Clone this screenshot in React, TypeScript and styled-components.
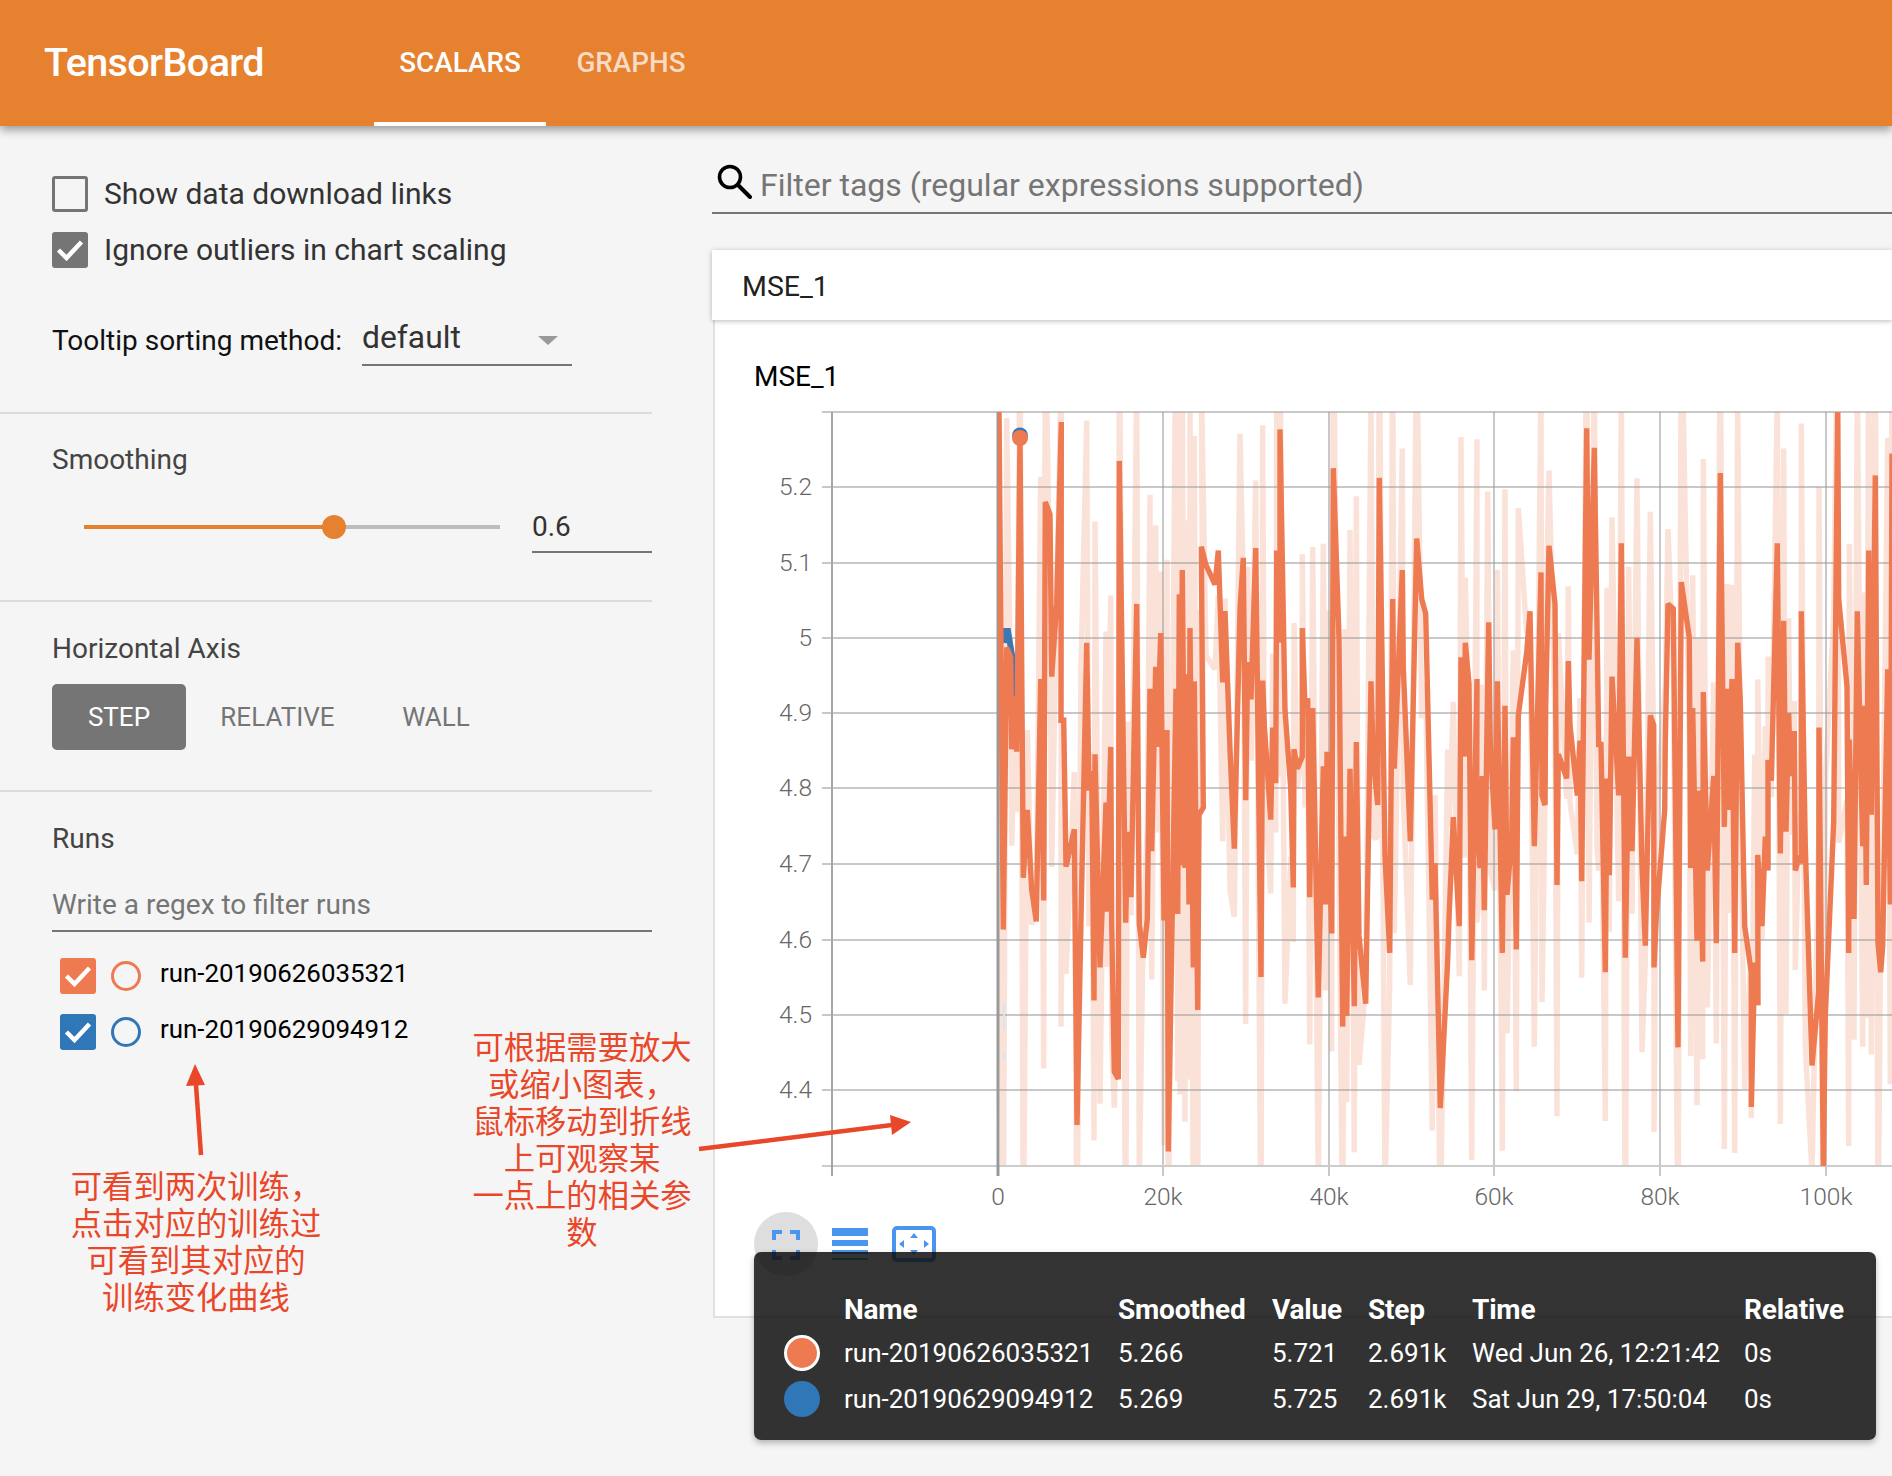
import React from "react";
import styled, { createGlobalStyle } from "styled-components";

const Global = createGlobalStyle`
  html, body { margin: 0; padding: 0; background: #f5f5f5; }
  body { width: 1892px; height: 1476px; overflow: hidden; font-family: Roboto, "Noto Sans CJK SC", sans-serif; }
`;

const Page = styled.div`
  position: relative;
  width: 1892px;
  height: 1476px;
  overflow: hidden;
  background: #f5f5f5;
`;

const Header = styled.header`
  position: relative;
  z-index: 2;
  display: flex;
  align-items: stretch;
  height: 126px;
  padding-left: 44px;
  box-sizing: border-box;
  background: #e6812f;
  box-shadow: 0 4px 9px rgba(0, 0, 0, 0.38);
`;

const Brand = styled.div`
  width: 330px;
  color: #fff;
  font-size: 39.5px;
  font-weight: 500;
  letter-spacing: -0.6px;
  line-height: 125px;
`;

const Tab = styled.div<{ $active?: boolean }>`
  width: ${(p) => (p.$active ? 172 : 170)}px;
  box-sizing: border-box;
  text-align: center;
  color: ${(p) => (p.$active ? "#fff" : "rgba(255,255,255,0.72)")};
  font-size: 27.8px;
  font-weight: 500;
  line-height: 125px;
  border-bottom: 4px solid ${(p) => (p.$active ? "#fff" : "transparent")};
`;

const Body = styled.div`
  display: grid;
  grid-template-columns: 652px 1fr;
  column-gap: 60px;
`;

const Sidebar = styled.aside`
  display: flex;
  flex-direction: column;
`;

const Section = styled.section<{ $height: number; $top: number }>`
  box-sizing: border-box;
  height: ${(p) => p.$height}px;
  padding: ${(p) => p.$top}px 0 0 52px;
  border-bottom: 2px solid #dcdcdc;
`;

const LastSection = styled.section`
  box-sizing: border-box;
  padding: 29px 0 0 52px;
`;

const CheckRow = styled.div`
  display: flex;
  align-items: center;
  height: 36px;
  margin-bottom: 20px;
  color: #333;
  font-size: 30px;
  gap: 16px;
`;

const CheckLabel = styled.span`
  margin-top: -2px;
`;

const Box = styled.div<{ $color?: string; $checked?: boolean }>`
  box-sizing: border-box;
  flex: none;
  width: 36px;
  height: 36px;
  border-radius: 3px;
  border: 3px solid ${(p) => p.$color ?? "#757575"};
  background: ${(p) => p.$color ?? (p.$checked ? "#757575" : "transparent")};
  display: flex;
  align-items: center;
  justify-content: center;
`;

const SortRow = styled.div`
  display: flex;
  align-items: flex-start;
  margin-top: 51px;
`;

const SortLabel = styled.div`
  width: 310px;
  color: #111;
  font-size: 28px;
  line-height: 44px;
`;

const Select = styled.div`
  position: relative;
  box-sizing: border-box;
  width: 210px;
  height: 47px;
  color: #333;
  font-size: 31.8px;
  line-height: 36px;
  border-bottom: 2px solid #757575;
`;

const Caret = styled.div`
  position: absolute;
  right: 14px;
  top: 17px;
  width: 0;
  height: 0;
  border-left: 10px solid transparent;
  border-right: 10px solid transparent;
  border-top: 9px solid #999;
`;

const SectionTitle = styled.div`
  color: #444;
  font-size: 28px;
  line-height: 36px;
`;

const SliderRow = styled.div`
  display: flex;
  align-items: flex-start;
  margin-top: 30px;
  padding-left: 32px;
`;

const SliderTrack = styled.div`
  position: relative;
  width: 416px;
  height: 4px;
  margin-top: 17px;
  background: #bdbdbd;
`;

const SliderFill = styled.div`
  height: 100%;
  background: #e6812f;
`;

const SliderKnob = styled.div`
  position: absolute;
  top: -10px;
  width: 24px;
  height: 24px;
  margin-left: -12px;
  border-radius: 50%;
  background: #e6812f;
`;

const SmoothValue = styled.div`
  box-sizing: border-box;
  width: 120px;
  height: 45px;
  margin-left: 32px;
  color: #333;
  font-size: 28px;
  line-height: 38px;
  border-bottom: 2px solid #757575;
`;

const AxisButtons = styled.div`
  display: flex;
  margin-top: 17px;
  color: #757575;
  font-size: 26px;
`;

const AxisButton = styled.div<{ $active?: boolean; $width: number }>`
  width: ${(p) => p.$width}px;
  height: 66px;
  line-height: 66px;
  text-align: center;
  border-radius: 5px;
  background: ${(p) => (p.$active ? "#757575" : "transparent")};
  color: ${(p) => (p.$active ? "#fff" : "#757575")};
`;

const RegexInput = styled.div`
  box-sizing: border-box;
  width: 600px;
  height: 55px;
  margin-top: 20px;
  color: #757575;
  font-size: 28px;
  line-height: 56px;
  border-bottom: 2px solid #757575;
`;

const RunList = styled.div`
  display: flex;
  flex-direction: column;
  gap: 20px;
  margin-top: 26px;
  padding-left: 8px;
`;

const RunRow = styled.div`
  display: flex;
  align-items: center;
  height: 36px;
`;

const RunCircle = styled.div<{ $color: string }>`
  box-sizing: border-box;
  width: 30px;
  height: 30px;
  margin-left: 15px;
  border-radius: 50%;
  border: 3px solid ${(p) => p.$color};
`;

const RunName = styled.div`
  margin: -7px 0 0 19px;
  color: #000;
  font-size: 25.9px;
`;

const Main = styled.main`
  display: flex;
  flex-direction: column;
  padding-top: 28px;
`;

const FilterBar = styled.div`
  display: flex;
  align-items: center;
  box-sizing: border-box;
  height: 60px;
  padding: 4px 0 0 4px;
  gap: 8px;
  color: #757575;
  font-size: 32px;
  border-bottom: 2px solid #757575;
`;

const FilterIconSlot = styled.div`
  line-height: 0;
  margin-top: -8px;
`;

const CardHead = styled.div`
  position: relative;
  z-index: 1;
  box-sizing: border-box;
  height: 70px;
  margin-top: 36px;
  padding-left: 30px;
  background: #fff;
  color: #212121;
  font-size: 28.5px;
  line-height: 73px;
  box-shadow: 0 1px 5px rgba(0, 0, 0, 0.28);
`;

const CardBody = styled.div`
  position: relative;
  box-sizing: border-box;
  height: 998px;
  margin-left: 1px;
  background: #fff;
  border-left: 2px solid #e0e0e0;
  border-bottom: 2px solid #e0e0e0;
`;

const ChartTitle = styled.div`
  height: 80px;
  padding-left: 39px;
  color: #000;
  font-size: 28px;
  line-height: 114px;
`;

const ChartSvg = styled.svg`
  display: block;
  width: 1177px;
  height: 820px;
  margin-bottom: -20px;
`;

const ChartIcons = styled.div`
  display: flex;
  align-items: flex-start;
  margin-top: 12px;
  padding-left: 39px;
`;

const IconCircle = styled.div`
  width: 64px;
  height: 64px;
  border-radius: 50%;
  background: #dedede;
  display: flex;
  justify-content: center;
  padding-top: 18px;
  box-sizing: border-box;
`;

const IconSlot = styled.div<{ $w: number; $left: number; $top: number }>`
  width: ${(p) => p.$w}px;
  margin-left: ${(p) => p.$left}px;
  padding-top: ${(p) => p.$top}px;
  flex: none;
  line-height: 0;
`;

const Tooltip = styled.div`
  position: absolute;
  left: 39px;
  top: 932px;
  box-sizing: border-box;
  width: 1122px;
  height: 188px;
  padding-top: 41px;
  border-radius: 7px;
  background: rgba(15, 15, 15, 0.85);
  color: #fff;
  font-size: 26px;
  box-shadow: 0 3px 6px rgba(0, 0, 0, 0.28);
  display: grid;
  grid-template-columns: 90px 274px 154px 96px 104px 272px 1fr;
  grid-template-rows: 37px 46px 46px;
  align-items: center;
`;

const TipHead = styled.div`
  font-size: 28px;
  font-weight: 700;
  letter-spacing: -0.2px;
  margin-top: -4px;
`;

const Swatch = styled.div<{ $color: string; $ring?: boolean }>`
  box-sizing: border-box;
  width: 36px;
  height: 36px;
  margin-left: 30px;
  border-radius: 50%;
  background: ${(p) => p.$color};
  border: ${(p) => (p.$ring ? "3px solid #fff" : "none")};
`;

const Note = styled.div<{ $x: number; $y: number; $w: number }>`
  position: absolute;
  left: ${(p) => p.$x}px;
  top: ${(p) => p.$y}px;
  width: ${(p) => p.$w}px;
  z-index: 3;
  text-align: center;
  color: #e9472a;
  font-family: "Noto Sans CJK SC", sans-serif;
  font-size: 31.3px;
  line-height: 37px;
`;

const ArrowLayer = styled.svg`
  position: absolute;
  left: 0;
  top: 0;
  z-index: 3;
  pointer-events: none;
`;

const strips: [number, number[][]][] = [
  [995, [[12,0],[25,1072],[35,490],[47,510],[50,700],[62,590],[65,705],[75,60],[85,965],[97,825],[110,990],[124,1055],[137,555],[146,1012],[151,190],[165,215],[170,550],[185,400],[199,25],[198,640],[206,640],[213,942],[238,865],[246,1475],[258,1050],[275,480],[282,785],[290,745],[297,1218],[300,710],[315,1150],[333,810],[335,1035],[347,695],[350,1060],[358,1365],[370,1380],[373,105],[392,1058],[398,870],[408,1005],[425,400],[433,1060],[445,1130],[457,1050],[465,575],[470,910],[482,530],[487,695],[497,460],[507,1053],[516,660],[520,1530],[543,575],[548,1040],[553,380],[555,940],[562,330],[570,945],[575,545],[582,1020],[585,450],[595,1150],[598,560],[608,1238],[612,835],[625,820],[619,282],[633,320],[660,360],[670,290],[683,562],[690,415],[705,700],[718,905],[735,410],[745,305],[752,805],[758,520],[768,597],[782,285],[798,1170],[803,558],[808,650],[827,845],[833,655],[842,770],[845,290],[855,480],[855,40],[870,620],[887,780],[895,985],[897,700]]],
  [1295, [[7,740],[22,715],[22,450],[30,615],[38,595],[44,1005],[53,615],[70,1212],[85,735],[92,1020],[96,705],[110,1080],[115,120],[132,470],[143,1272],[150,880],[155,1250],[165,740],[178,1230],[184,685],[192,1085],[212,1225],[228,560],[235,720],[248,815],[253,140],[270,920],[284,1120],[293,390],[298,740],[322,330],[325,530],[346,890],[365,265],[380,390],[392,420],[412,1010],[420,935],[436,1440],[458,1135],[462,1050],[475,840],[493,1065],[498,510],[508,715],[511,480],[522,565],[530,1135],[546,555],[545,825],[555,945],[562,755],[568,1032],[578,560],[581,438],[586,690],[600,865],[607,560],[622,1120],[630,610],[636,1000],[650,885],[655,675],[664,1113],[670,630],[695,500],[705,415],[718,900],[738,335],[741,795],[750,815],[752,610],[762,280],[780,400],[786,980],[790,710],[815,760],[820,518],[825,650],[847,795],[855,682],[860,972],[875,38],[882,515]]],
  [1592, [[7,78],[15,440],[20,690],[27,690],[40,1160],[45,760],[52,960],[60,550],[80,795],[88,275],[100,1130],[110,715],[120,910],[135,470],[150,940],[160,1105],[175,630],[185,650],[186,1150],[193,1045],[218,825],[220,685],[228,400],[244,410],[258,1315],[268,355],[292,470],[296,945],[302,615],[315,1095],[320,785],[332,1138],[334,582],[346,950],[365,755],[373,1100],[385,130],[397,860],[405,575],[408,825],[420,555],[428,1120],[437,480],[445,600],[458,1065],[478,1160],[478,1438],[488,1140],[498,1228],[497,918],[510,1065],[520,880],[528,950],[528,722],[538,765],[556,275],[565,915],[575,435],[582,870],[590,625],[595,755],[607,662],[610,950],[622,920],[628,935],[628,415],[640,900],[660,1352],[680,1200],[681,655],[694,1560],[700,1250],[725,850],[737,0],[740,390],[765,570],[770,1120],[772,680],[786,1050],[796,415],[812,900],[817,610],[823,980],[830,290],[838,835],[850,135],[858,1100],[866,1160],[872,1105],[887,535],[895,1020],[900,90]]],
];

const main: number[][] = strips.flatMap(([base, pts]) =>
  pts.map(([x, y]) => [base + x / 3, 410 + y / 2.063])
);

const pts = (list: number[][]) => list.map(([x, y]) => `${x.toFixed(1)},${y.toFixed(1)}`).join(" ");

const MEAN = 770;
const raw = main.map(([x, y], i) => {
  const prev = i > 0 ? main[i - 1][1] : y;
  const v = MEAN + (y - 0.6 * prev - 0.4 * MEAN) / 0.62;
  return [x, Math.max(300, Math.min(1260, v))];
});

const Y_TICKS: [string, number][] = [["5.2",487],["5.1",563],["5",638],["4.9",713],["4.8",788],["4.7",864],["4.6",940],["4.5",1015],["4.4",1090]];
const X_TICKS: [string, number][] = [["0",998],["20k",1163],["40k",1329],["60k",1494],["80k",1660],["100k",1826]];

const tickStyle = { fontFamily: "Roboto, sans-serif", fontWeight: 300, fontSize: 24.5, fill: "#666" } as const;

function Chart() {
  return (
    <ChartSvg viewBox="715 400 1177 820">
      <defs>
        <clipPath id="plot"><rect x="998" y="412" width="894" height="754" /></clipPath>
      </defs>
      <g clipPath="url(#plot)">
        <polyline points={pts(raw)} fill="none" stroke="#ee7a52" strokeOpacity="0.22" strokeWidth="5.5" strokeLinejoin="miter" strokeMiterlimit="1" />
      </g>
      <g stroke="#9b9b9b" strokeOpacity="0.55" strokeWidth="2">
        {Y_TICKS.map(([, y]) => <line key={y} x1="822" x2="1892" y1={y} y2={y} />)}
        <line x1="822" x2="1892" y1="412" y2="412" />
      </g>
      <g stroke="#9b9b9b" strokeOpacity="0.55" strokeWidth="2">
        {X_TICKS.slice(1).map(([, x]) => <line key={x} x1={x} x2={x} y1="412" y2="1176" />)}
      </g>
      <line x1="822" x2="1892" y1="1166" y2="1166" stroke="#ccc" strokeWidth="2" />
      <line x1="832" x2="832" y1="412" y2="1176" stroke="#a6a6a6" strokeWidth="2" />
      <line x1="998" x2="998" y1="412" y2="1176" stroke="#999" strokeWidth="3" />
      <g clipPath="url(#plot)">
        <rect x="1003" y="1004" width="2" height="26" fill="#d6e6f4" />
        <rect x="1002.5" y="1054" width="3" height="5" fill="#d6e6f4" />
        <polyline points="1004,643 1005.5,631 1008,631 1012,655 1014,695 1018,698" fill="none" stroke="#3d78b2" strokeWidth="6" />
        <circle cx="1020" cy="435.5" r="8" fill="#3d78b2" />
        <polyline points={pts(main)} fill="none" stroke="#ee7a52" strokeWidth="5.4" strokeLinejoin="miter" strokeMiterlimit="2" />
        <circle cx="1020" cy="438" r="8" fill="#ee7a52" />
      </g>
      {Y_TICKS.map(([t, y]) => <text key={t} x="812" y={y + 8} textAnchor="end" style={tickStyle}>{t}</text>)}
      {X_TICKS.map(([t, x]) => <text key={t} x={x} y="1205" textAnchor="middle" style={tickStyle}>{t}</text>)}
    </ChartSvg>
  );
}

const Check = () => (
  <svg width="28" height="22" viewBox="0 0 28 22">
    <path d="M2.5 11 L10.5 19 L25.5 3" fill="none" stroke="#fff" strokeWidth="4.5" />
  </svg>
);

const SearchIcon = () => (
  <svg width="36" height="36" viewBox="0 0 36 36">
    <circle cx="14" cy="14" r="10.5" fill="none" stroke="#000" strokeWidth="3.6" />
    <path d="M22 22 L34 34" stroke="#000" strokeWidth="4" strokeLinecap="round" />
  </svg>
);

const FitIcon = () => (
  <svg width="28" height="30" viewBox="0 0 28 30">
    <path d="M10 2 H2 V10 M18 2 H26 V10 M2 20 V28 H10 M26 20 V28 H18" fill="none" stroke="#4a96ee" strokeWidth="4" />
  </svg>
);

const LinesIcon = () => (
  <svg width="36" height="34" viewBox="0 0 36 34">
    <rect y="0" width="36" height="8" fill="#4a96ee" />
    <rect y="12" width="36" height="6" fill="#4a96ee" />
    <rect y="22" width="36" height="4" fill="#4a96ee" />
    <rect y="30" width="36" height="2" fill="#4a96ee" />
  </svg>
);

const DomainIcon = () => (
  <svg width="44" height="36" viewBox="0 0 44 36">
    <rect x="2" y="2" width="40" height="32" rx="3" fill="none" stroke="#4a96ee" strokeWidth="4" />
    <path d="M22 7 L26 12 H18 Z M22 29 L26 24 H18 Z M7 18 L12 14 V22 Z M37 18 L32 14 V22 Z" fill="#4a96ee" />
  </svg>
);

const TIP_ROWS = [
  { color: "#ee7a52", ring: true, cells: ["run-20190626035321", "5.266", "5.721", "2.691k", "Wed Jun 26, 12:21:42", "0s"] },
  { color: "#2f77b7", ring: false, cells: ["run-20190629094912", "5.269", "5.725", "2.691k", "Sat Jun 29, 17:50:04", "0s"] },
];

export default function App() {
  return (
    <Page>
      <Global />
      <Header>
        <Brand>TensorBoard</Brand>
        <Tab $active>SCALARS</Tab>
        <Tab>GRAPHS</Tab>
      </Header>
      <Body>
        <Sidebar>
          <Section $height={288} $top={50}>
            <CheckRow><Box /><CheckLabel>Show data download links</CheckLabel></CheckRow>
            <CheckRow><Box $checked><Check /></Box><CheckLabel>Ignore outliers in chart scaling</CheckLabel></CheckRow>
            <SortRow>
              <SortLabel>Tooltip sorting method:</SortLabel>
              <Select>default<Caret /></Select>
            </SortRow>
          </Section>
          <Section $height={188} $top={28}>
            <SectionTitle>Smoothing</SectionTitle>
            <SliderRow>
              <SliderTrack>
                <SliderFill style={{ width: "60%" }} />
                <SliderKnob style={{ left: "60%" }} />
              </SliderTrack>
              <SmoothValue>0.6</SmoothValue>
            </SliderRow>
          </Section>
          <Section $height={190} $top={29}>
            <SectionTitle>Horizontal Axis</SectionTitle>
            <AxisButtons>
              <AxisButton $active $width={134}>STEP</AxisButton>
              <AxisButton $width={183}>RELATIVE</AxisButton>
              <AxisButton $width={134}>WALL</AxisButton>
            </AxisButtons>
          </Section>
          <LastSection>
            <SectionTitle>Runs</SectionTitle>
            <RegexInput>Write a regex to filter runs</RegexInput>
            <RunList>
              <RunRow>
                <Box $color="#ee7a52"><Check /></Box>
                <RunCircle $color="#ee7a52" />
                <RunName>run-20190626035321</RunName>
              </RunRow>
              <RunRow>
                <Box $color="#2f77b7"><Check /></Box>
                <RunCircle $color="#2f77b7" />
                <RunName>run-20190629094912</RunName>
              </RunRow>
            </RunList>
          </LastSection>
        </Sidebar>
        <Main>
          <FilterBar><FilterIconSlot><SearchIcon /></FilterIconSlot>Filter tags (regular expressions supported)</FilterBar>
          <CardHead>MSE_1</CardHead>
          <CardBody>
            <ChartTitle>MSE_1</ChartTitle>
            <Chart />
            <ChartIcons>
              <IconCircle><FitIcon /></IconCircle>
              <IconSlot $w={36} $left={14} $top={16}><LinesIcon /></IconSlot>
              <IconSlot $w={44} $left={24} $top={14}><DomainIcon /></IconSlot>
            </ChartIcons>
            <Tooltip>
              <span />
              <TipHead>Name</TipHead>
              <TipHead>Smoothed</TipHead>
              <TipHead>Value</TipHead>
              <TipHead>Step</TipHead>
              <TipHead>Time</TipHead>
              <TipHead>Relative</TipHead>
              {TIP_ROWS.map((r) => (
                <React.Fragment key={r.cells[0]}>
                  <Swatch $color={r.color} $ring={r.ring} />
                  {r.cells.map((c, i) => <span key={i}>{c}</span>)}
                </React.Fragment>
              ))}
            </Tooltip>
          </CardBody>
        </Main>
      </Body>
      <Note $x={46} $y={1166} $w={300}>
        {"可看到两次训练\uFF0C"}<br />点击对应的训练过<br />可看到其对应的<br />训练变化曲线
      </Note>
      <Note $x={462} $y={1027} $w={240}>
        可根据需要放大<br />{"或缩小图表\uFF0C"}<br />鼠标移动到折线<br />上可观察某<br />一点上的相关参<br />数
      </Note>
      <ArrowLayer width="1892" height="1476" viewBox="0 0 1892 1476">
        <path d="M201 1155 L196 1085" stroke="#e9472a" strokeWidth="4.5" fill="none" />
        <path d="M195 1064 L186 1086 L205 1085 Z" fill="#e9472a" />
        <path d="M699 1149 L892 1125" stroke="#e9472a" strokeWidth="4.5" fill="none" />
        <path d="M911 1122 L890 1115 L892 1135 Z" fill="#e9472a" />
      </ArrowLayer>
    </Page>
  );
}
